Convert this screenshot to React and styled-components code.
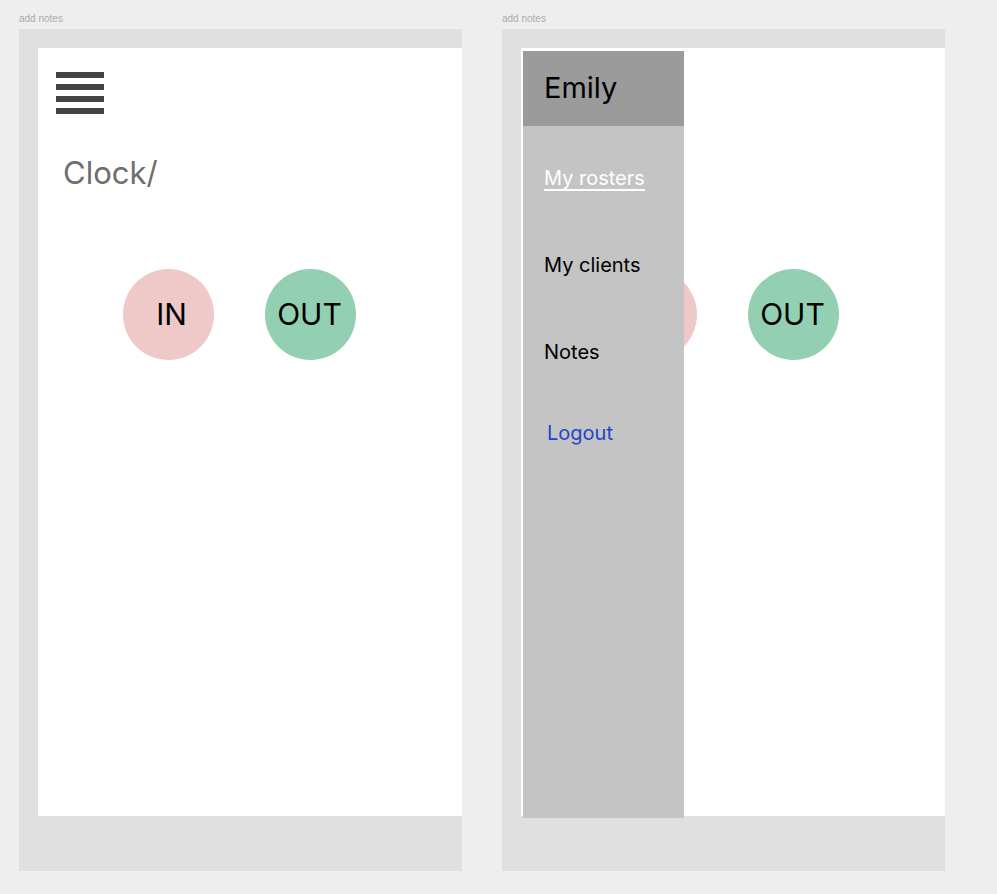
import React from 'react';
import styled, { createGlobalStyle } from 'styled-components';

const GlobalStyle = createGlobalStyle`
  html, body {
    margin: 0;
    padding: 0;
    background: #eeeeee;
    font-family: Inter, 'Noto Sans', sans-serif;
  }
`;

const Page = styled.div`
  display: flex;
  gap: 40px;
  padding: 12px 0 0 19px;
  min-height: 894px;
  box-sizing: border-box;
  background: #eeeeee;
`;

const Artboard = styled.div`
  display: flex;
  flex-direction: column;
`;

const Label = styled.div`
  font-family: 'Liberation Sans', Arial, sans-serif;
  font-size: 10px;
  line-height: 13px;
  color: #ababab;
  height: 17px;
`;

const Frame = styled.div`
  background: #e0e0e0;
  width: 443px;
  height: 842px;
  padding: 19px 0 0 19px;
  box-sizing: border-box;
`;

const Screen = styled.div`
  position: relative;
  background: #ffffff;
  width: 424px;
  height: 768px;
  padding: 24px 0 0 18px;
  box-sizing: border-box;
`;

const Hamburger = styled.button`
  display: block;
  border: 0;
  padding: 0;
  background: none;
  width: 48px;
  height: 42px;
  cursor: pointer;
`;

const Title = styled.h1`
  margin: 43px 0 0 7px;
  font-size: 31px;
  line-height: 32px;
  font-weight: 400;
  color: #6e6e6e;
`;

const ButtonRow = styled.div`
  display: flex;
  gap: 51px;
  margin: 80px 0 0 67px;
`;

const Circle = styled.button`
  width: 91px;
  height: 91px;
  border-radius: 50%;
  border: 0;
  background: ${(p) => (p.$tone === 'in' ? '#efc8c8' : '#93cfb2')};
  color: #000;
  font-family: Inter, 'Noto Sans', sans-serif;
  font-size: 30px;
  font-weight: 400;
  display: flex;
  align-items: center;
  justify-content: center;
  padding: 0 ${(p) => (p.$tone === 'in' ? '0 2px 6px' : '2px 2px 0')};
  cursor: pointer;
`;

const Drawer = styled.nav`
  position: absolute;
  left: 2px;
  top: 3px;
  width: 161px;
  height: 767px;
  background: #c4c4c4;
  display: flex;
  flex-direction: column;
`;

const DrawerHeader = styled.div`
  height: 75px;
  background: #9b9b9b;
  display: flex;
  align-items: center;
  padding: 0 0 2px 21px;
  box-sizing: border-box;
  font-size: 29px;
  color: #000;
`;

const MenuList = styled.ul`
  list-style: none;
  margin: 0;
  padding: 40px 0 0 21px;
  display: flex;
  flex-direction: column;
  gap: 62px;
`;

const MenuItem = styled.li`
  font-size: 20px;
  line-height: 25px;
  color: ${(p) => (p.$active ? '#ffffff' : p.$link ? '#2146c8' : '#000000')};
  text-decoration: ${(p) => (p.$active ? 'underline' : 'none')};
  text-decoration-thickness: 1.5px;
  text-underline-offset: 4px;
  margin: ${(p) => (p.$link ? '-6px 0 0 3px' : '0')};
`;

const HamburgerIcon = () => (
  <svg width="48" height="42" viewBox="0 0 48 42">
    {[0, 12, 24, 36].map((y) => (
      <rect key={y} x="0" y={y} width="48" height="6" fill="#434343" />
    ))}
  </svg>
);

const ClockScreen = ({ menuOpen }) => (
  <Screen>
    <Hamburger aria-label="menu">
      <HamburgerIcon />
    </Hamburger>
    <Title>Clock/</Title>
    <ButtonRow>
      <Circle $tone="in">IN</Circle>
      <Circle $tone="out">OUT</Circle>
    </ButtonRow>
    {menuOpen && (
      <Drawer>
        <DrawerHeader>Emily</DrawerHeader>
        <MenuList>
          <MenuItem $active>My rosters</MenuItem>
          <MenuItem>My clients</MenuItem>
          <MenuItem>Notes</MenuItem>
          <MenuItem $link>Logout</MenuItem>
        </MenuList>
      </Drawer>
    )}
  </Screen>
);

export default function App() {
  return (
    <>
      <GlobalStyle />
      <Page>
        <Artboard>
          <Label>add notes</Label>
          <Frame>
            <ClockScreen />
          </Frame>
        </Artboard>
        <Artboard>
          <Label>add notes</Label>
          <Frame>
            <ClockScreen menuOpen />
          </Frame>
        </Artboard>
      </Page>
    </>
  );
}
